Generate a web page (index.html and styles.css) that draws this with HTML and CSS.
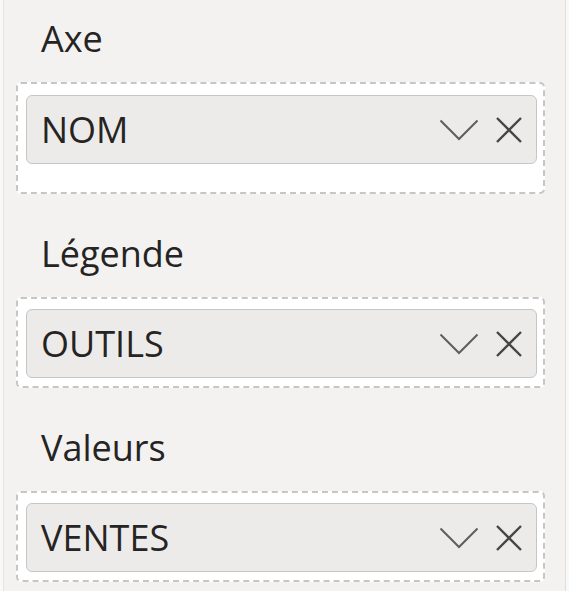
FILE: index.html
```html
<!DOCTYPE html>
<html lang="fr">
<head>
<meta charset="utf-8">
<title>Champs</title>
<link rel="stylesheet" href="styles.css">
</head>
<body>
<div class="pane">
  <section class="well well-first">
    <div class="well-label">Axe</div>
    <div class="drop drop-tall">
      <div class="pill">
        <span class="pill-text">NOM</span>
        <svg class="chev" width="40" height="22" viewBox="0 0 40 22"><path d="M1.5 1.5 L20 20 L38.5 1.5" fill="none" stroke="#605e5c" stroke-width="2"/></svg>
        <svg class="close" width="28" height="26" viewBox="0 0 28 26"><path d="M2 1 L26 25 M26 1 L2 25" fill="none" stroke="#484644" stroke-width="2.4"/></svg>
      </div>
    </div>
  </section>
  <section class="well">
    <div class="well-label">Légende</div>
    <div class="drop">
      <div class="pill">
        <span class="pill-text">OUTILS</span>
        <svg class="chev" width="40" height="22" viewBox="0 0 40 22"><path d="M1.5 1.5 L20 20 L38.5 1.5" fill="none" stroke="#605e5c" stroke-width="2"/></svg>
        <svg class="close" width="28" height="26" viewBox="0 0 28 26"><path d="M2 1 L26 25 M26 1 L2 25" fill="none" stroke="#484644" stroke-width="2.4"/></svg>
      </div>
    </div>
  </section>
  <section class="well">
    <div class="well-label">Valeurs</div>
    <div class="drop">
      <div class="pill">
        <span class="pill-text">VENTES</span>
        <svg class="chev" width="40" height="22" viewBox="0 0 40 22"><path d="M1.5 1.5 L20 20 L38.5 1.5" fill="none" stroke="#605e5c" stroke-width="2"/></svg>
        <svg class="close" width="28" height="26" viewBox="0 0 28 26"><path d="M2 1 L26 25 M26 1 L2 25" fill="none" stroke="#484644" stroke-width="2.4"/></svg>
      </div>
    </div>
  </section>
</div>
</body>
</html>
```
FILE: styles.css
```css
html, body {
  margin: 0;
  padding: 0;
  height: 100%;
}
body {
  background: #f8f8f8;
  display: flex;
  font-family: "Open Sans", "Noto Sans", sans-serif;
  color: #252423;
  overflow: hidden;
}
.pane {
  box-sizing: border-box;
  margin-left: 3px;
  width: 563px;
  height: 591px;
  background: #f3f2f1;
  border-left: 1px solid #e6e4e2;
  border-right: 1px solid #e1dfdd;
  padding: 17px 20px 0 12px;
}
.well {
  margin-top: 38px;
}
.well-first {
  margin-top: 0;
}
.well-label {
  font-size: 36px;
  line-height: 44px;
  height: 44px;
  padding-left: 25px;
  margin-bottom: 21px;
}
.drop {
  background: #ffffff;
  border: 2px dashed #c8c6c4;
  border-radius: 5px;
  padding: 10px 6px 8px 8px;
}
.drop-tall {
  padding-top: 11px;
  padding-bottom: 28px;
}
.pill {
  box-sizing: border-box;
  height: 69px;
  display: flex;
  align-items: center;
  background: #edebe9;
  border: 1.5px solid #c8c6c4;
  border-radius: 6px;
  padding: 0 13px 0 14px;
}
.pill-text {
  flex: 1;
  font-size: 36px;
  line-height: 44px;
  color: #252423;
}
.chev {
  display: block;
  margin-right: 16px;
}
.close {
  display: block;
}
```
